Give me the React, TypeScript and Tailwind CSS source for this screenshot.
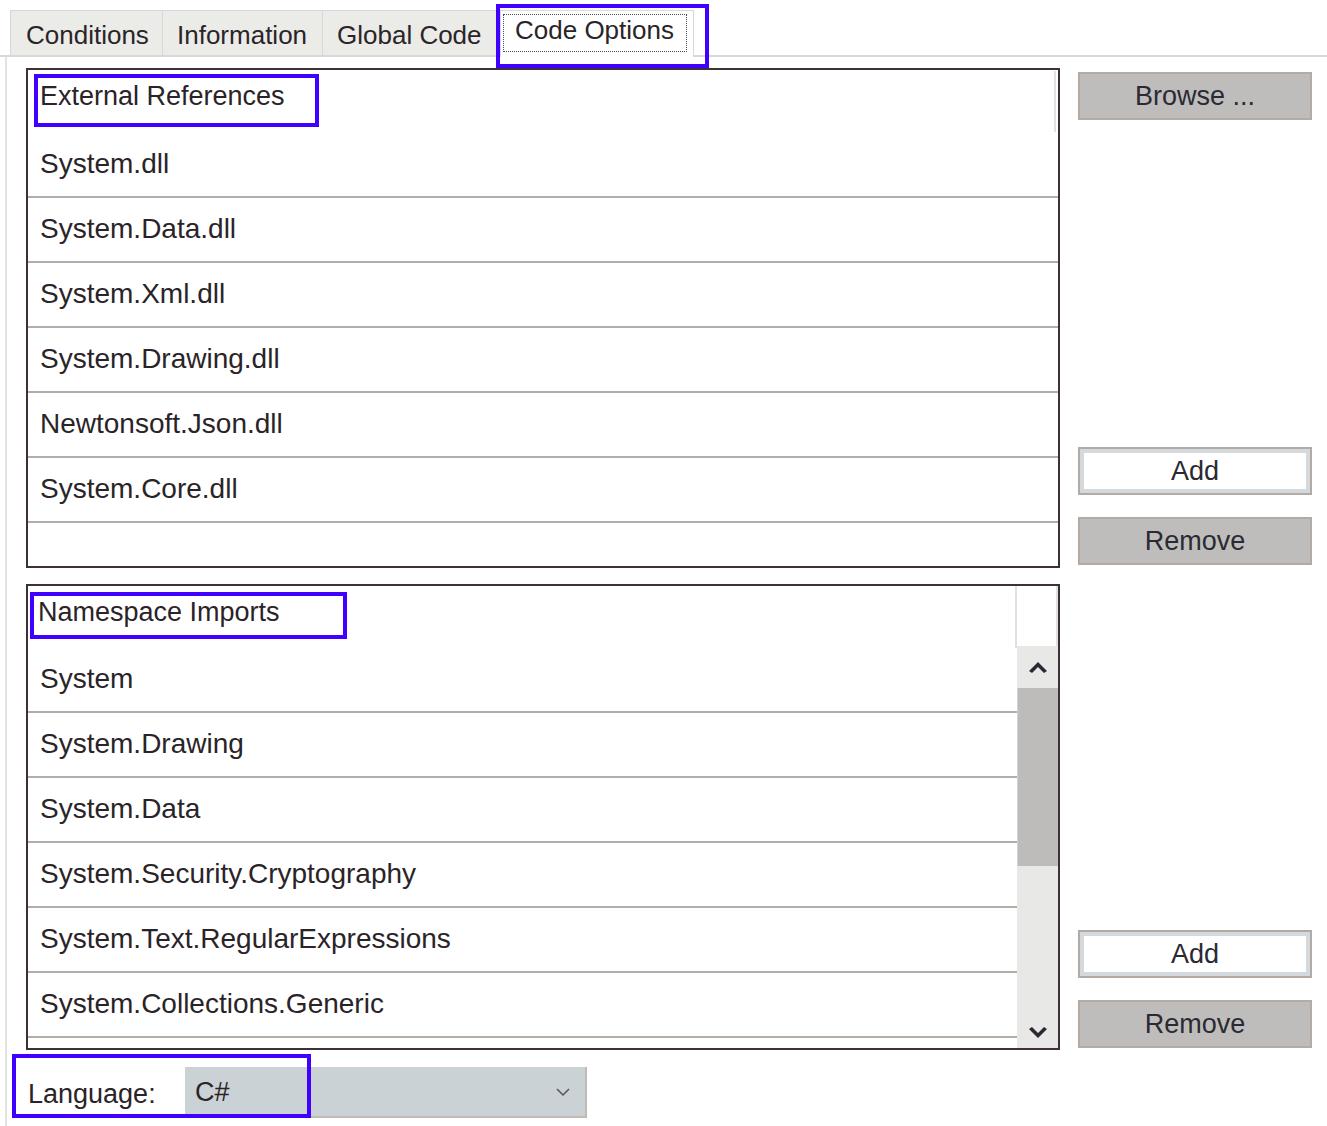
import React from "react";

const refs = ["System.dll", "System.Data.dll", "System.Xml.dll", "System.Drawing.dll", "Newtonsoft.Json.dll", "System.Core.dll"];
const imports = [
  "System",
  "System.Drawing",
  "System.Data",
  "System.Security.Cryptography",
  "System.Text.RegularExpressions",
  "System.Collections.Generic",
];

function GrayButton({ label }: { label: string }) {
  return (
    <div className="h-[48px] w-[234px] border-2 border-[#b3aaa3] bg-[#bebdbc] flex items-center justify-center text-[27px] text-[#2b2a33]">
      {label}
    </div>
  );
}

function WhiteButton({ label }: { label: string }) {
  return (
    <div className="h-[48px] w-[234px] border-2 border-[#b3aaa3] bg-[#d3d9dc] p-[4px] flex">
      <div className="flex-1 bg-white flex items-center justify-center text-[27px] text-[#2b2a33]">{label}</div>
    </div>
  );
}

export default function App() {
  return (
    <div
      className="relative w-[1327px] h-[1126px] bg-white overflow-hidden text-[#2a2428]"
      style={{ fontFamily: '"Liberation Sans", Arial, sans-serif' }}
    >
      {/* Tabs */}
      <div className="flex items-end h-[57px] pl-[10px] border-b-2 border-[#d5d9db]">
        <div className="h-[45px] w-[153px] bg-[#ebebe8] border border-b-0 border-[#d4d8da] flex items-center pt-[4px] pl-[15px] text-[26px]">
          Conditions
        </div>
        <div className="h-[45px] w-[160px] bg-[#ebebe8] border border-l-0 border-b-0 border-[#d4d8da] flex items-center pt-[4px] pl-[14px] text-[26px]">
          Information
        </div>
        <div className="h-[45px] w-[176px] bg-[#ebebe8] border border-l-0 border-b-0 border-[#d4d8da] flex items-center pt-[4px] pl-[14px] text-[26px]">
          Global Code
        </div>
        <div className="h-[47px] w-[194px] ml-[1px] -mb-[2px] bg-white border border-b-0 border-[#d4d8da] flex items-start pt-[3px] pl-[2px]">
          <div className="h-[38px] w-[184px] border border-dotted border-[#4a4a55] flex items-center pb-[5px] pl-[11px] text-[26px]">
            Code Options
          </div>
        </div>
      </div>

      {/* Panel */}
      <div className="ml-[5px] h-[1069px] border-l-2 border-[#e4e4e1] pl-[19px] pt-[11px]">
        <div className="flex">
          {/* Left column */}
          <div className="w-[1034px] flex flex-col">
            {/* External References list */}
            <div className="h-[500px] border-2 border-[#3b3137] flex flex-col">
              <div className="h-[63px] flex">
                <div className="flex-1 flex items-center pb-[10px] pl-[12px] text-[27px]">External References</div>
                <div className="w-[2px] bg-[#dfe1e2] mr-[2px] my-[1px]" />
              </div>
              {refs.map((r) => (
                <div key={r} className="h-[65px] border-b-2 border-[#b4aca7] flex items-center pb-[2px] pl-[12px] text-[28px]">
                  {r}
                </div>
              ))}
            </div>

            {/* Namespace Imports list */}
            <div className="mt-[16px] h-[466px] border-2 border-[#3b3137] flex">
              <div className="flex-1 flex flex-col overflow-hidden">
                <div className="h-[62px] flex items-center pb-[10px] pl-[10px] text-[27px] border-r-2 border-[#dfe1e2] shrink-0">
                  Namespace Imports
                </div>
                {imports.map((r) => (
                  <div key={r} className="h-[65px] shrink-0 border-b-2 border-[#b4aca7] flex items-center pb-[2px] pl-[12px] text-[28px]">
                    {r}
                  </div>
                ))}
              </div>
              <div className="w-[41px] flex flex-col">
                <div className="h-[60px] bg-white border-r-2 border-[#dfe1e2]" />
                <div className="h-[42px] bg-[#e8e9e6] flex items-center justify-center">
                  <svg width="20" height="14" viewBox="0 0 20 14">
                    <path d="M1 11 L10 2 L19 11 L16 13 L10 7 L4 13 Z" fill="#2e2630" />
                  </svg>
                </div>
                <div className="h-[178px] bg-[#bdbcbb] border-l border-[#d0d4d6]" />
                <div className="flex-1 bg-[#e8e9e6] flex items-end justify-center pb-[8px]">
                  <svg width="20" height="14" viewBox="0 0 20 14">
                    <path d="M1 3 L10 12 L19 3 L16 1 L10 7 L4 1 Z" fill="#2e2630" />
                  </svg>
                </div>
              </div>
            </div>

            {/* Language */}
            <div className="mt-[17px] flex items-center">
              <div className="w-[159px] text-[27px] pl-[2px] pt-[3px]">Language:</div>
              <div className="h-[51px] w-[402px] bg-[#cbd2d6] border-b-2 border-r-2 border-[#c2bab5] flex items-center pl-[10px] text-[27px]">
                <span className="flex-1 pt-[2px]">C#</span>
                <svg width="16" height="10" viewBox="0 0 16 10" className="mr-[14px]">
                  <path d="M2 2 L8 8 L14 2" fill="none" stroke="#555" strokeWidth="1.5" />
                </svg>
              </div>
            </div>
          </div>

          {/* Right column */}
          <div className="ml-[18px] w-[234px] flex flex-col pt-[4px]">
            <GrayButton label="Browse ..." />
            <div className="mt-[327px]">
              <WhiteButton label="Add" />
            </div>
            <div className="mt-[22px]">
              <GrayButton label="Remove" />
            </div>
            <div className="mt-[365px]">
              <WhiteButton label="Add" />
            </div>
            <div className="mt-[22px]">
              <GrayButton label="Remove" />
            </div>
          </div>
        </div>
      </div>

      {/* Annotation highlight boxes */}
      <div className="absolute left-[496px] top-[4px] w-[213px] h-[64px] border-4 border-[#4000ff]" />
      <div className="absolute left-[34px] top-[74px] w-[285px] h-[53px] border-4 border-[#4000ff]" />
      <div className="absolute left-[30px] top-[592px] w-[317px] h-[47px] border-4 border-[#4000ff]" />
      <div className="absolute left-[12px] top-[1054px] w-[299px] h-[64px] border-4 border-[#4000ff]" />
    </div>
  );
}
